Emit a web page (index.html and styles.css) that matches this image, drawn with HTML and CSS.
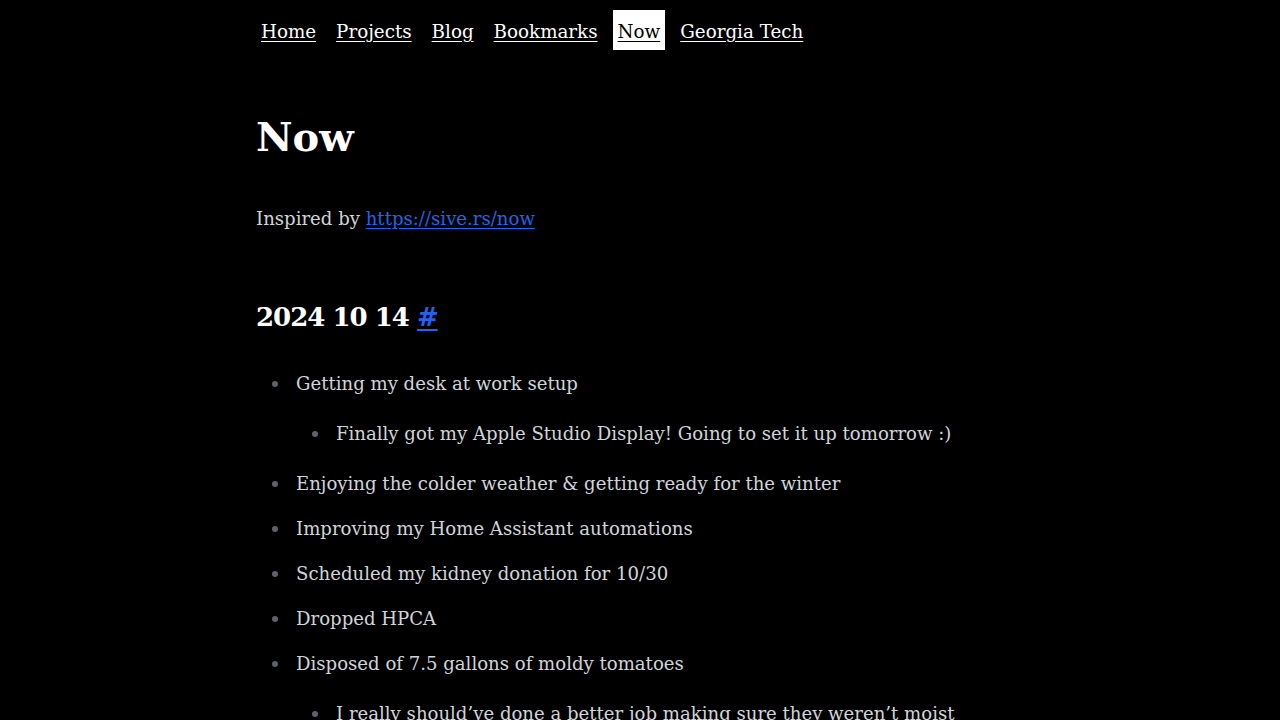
FILE: index.html
```html
<!DOCTYPE html>
<html lang="en">
<head>
<meta charset="utf-8">
<title>Now</title>
<link rel="stylesheet" href="styles.css">
</head>
<body>
<div class="container">
  <nav class="nav">
    <a href="#" class="nav-link">Home</a>
    <a href="#" class="nav-link">Projects</a>
    <a href="#" class="nav-link">Blog</a>
    <a href="#" class="nav-link">Bookmarks</a>
    <a href="#" class="nav-link active">Now</a>
    <a href="#" class="nav-link">Georgia Tech</a>
  </nav>
  <main class="prose">
    <h1 class="title">Now</h1>
    <p class="intro">Inspired by <a href="#" class="link">https://sive.rs/now</a></p>
    <h2 class="date">2024 10 14 <a href="#" class="link">#</a></h2>
    <ul class="list">
      <li>Getting my desk at work setup
        <ul class="list nested">
          <li>Finally got my Apple Studio Display! Going to set it up tomorrow :)</li>
        </ul>
      </li>
      <li>Enjoying the colder weather &amp; getting ready for the winter</li>
      <li>Improving my Home Assistant automations</li>
      <li>Scheduled my kidney donation for 10/30</li>
      <li>Dropped HPCA</li>
      <li>Disposed of 7.5 gallons of moldy tomatoes
        <ul class="list nested">
          <li>I really should’ve done a better job making sure they weren’t moist</li>
        </ul>
      </li>
    </ul>
  </main>
</div>
</body>
</html>
```
FILE: styles.css
```css
html, body {
  margin: 0;
  padding: 0;
  background: #000;
}
body {
  font-family: "DejaVu Serif", "Liberation Serif", serif;
  color: #d1d5db;
}
.container {
  max-width: 768px;
  margin: 0 auto;
}
.nav {
  display: flex;
  gap: 10px;
  padding-top: 10px;
}
.nav-link {
  color: #fff;
  font-size: 18.3px;
  line-height: 30px;
  padding: 7px 5px 3px 5px;
  text-decoration: underline;
  text-underline-offset: 3px;
}
.nav-link.active {
  background: #fff;
  color: #000;
}
.prose {
  font-size: 18.1px;
  line-height: 33px;
}
.title {
  color: #fff;
  font-size: 40px;
  font-weight: 700;
  line-height: 56px;
  margin: 59px 0 0 0;
}
.intro {
  margin: 37px 0 0 0;
}
.link {
  color: #2563eb;
  text-decoration: underline;
  text-underline-offset: 3px;
}
.date {
  color: #fff;
  font-size: 26px;
  font-weight: 700;
  letter-spacing: -1px;
  line-height: 40px;
  margin: 62px 0 0 0;
}
.list {
  list-style: none;
  margin: 30px 0 0 0;
  padding: 0 0 0 40px;
}
.list li {
  position: relative;
  margin-top: 12px;
}
.list li:first-child {
  margin-top: 0;
}
.list li::before {
  content: "";
  position: absolute;
  left: -24px;
  top: 14px;
  width: 6px;
  height: 6px;
  border-radius: 50%;
  background: #5b6270;
}
.list.nested {
  margin: 17px 0 17px 0;
}
```
